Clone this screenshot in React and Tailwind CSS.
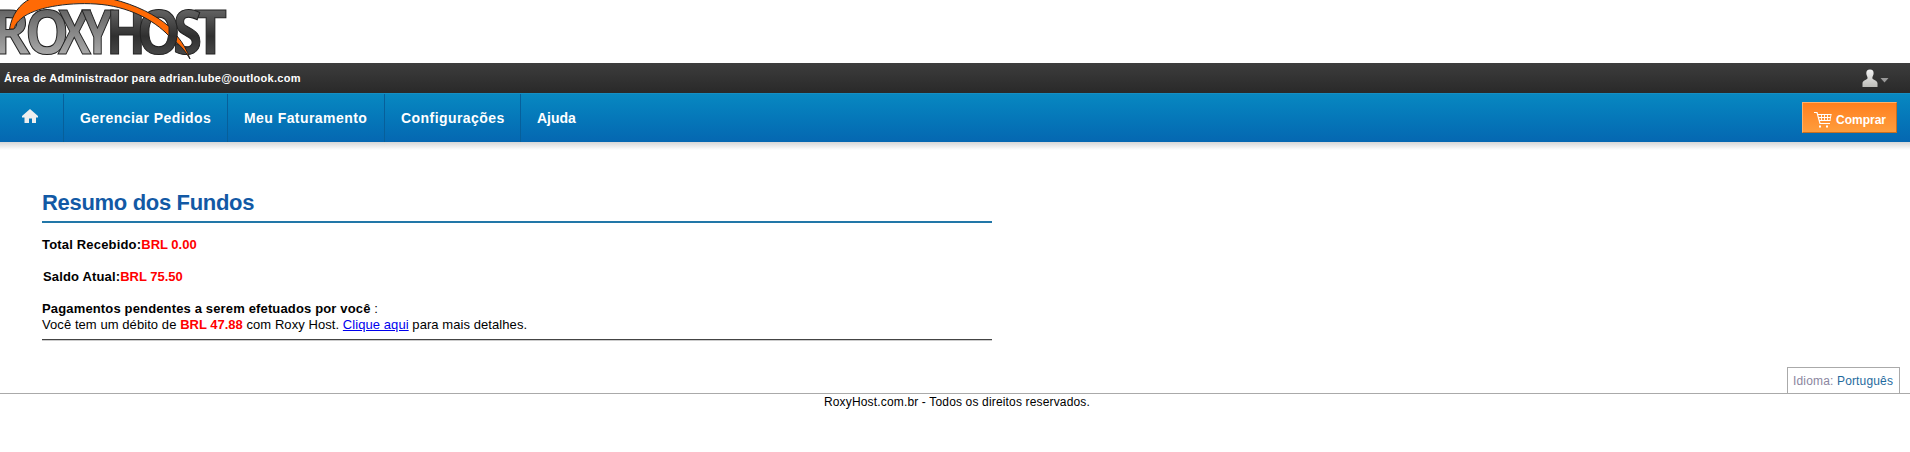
import React from "react";

function Glyph({ x, w, fill, children }) {
  return (
    <text x={x} y="53.5" fontSize="61" textLength={w} lengthAdjust="spacingAndGlyphs" fill={fill} stroke="#222" strokeWidth="1.1">
      {children}
    </text>
  );
}

function Logo() {
  return (
    <svg width="232" height="63" viewBox="0 0 232 63" className="block font-['Open_Sans',sans-serif] font-bold">
      <defs>
        <linearGradient id="light" gradientUnits="userSpaceOnUse" x1="0" y1="8" x2="0" y2="55">
          <stop offset="0" stopColor="#626262" />
          <stop offset="1" stopColor="#a9a9a9" />
        </linearGradient>
        <linearGradient id="dark" gradientUnits="userSpaceOnUse" x1="0" y1="8" x2="0" y2="55">
          <stop offset="0" stopColor="#666" />
          <stop offset="0.6" stopColor="#303030" />
          <stop offset="1" stopColor="#484848" />
        </linearGradient>
      </defs>
      <Glyph x="-8" w="38" fill="url(#light)">R</Glyph>
      <Glyph x="25" w="44" fill="url(#light)">O</Glyph>
      <Glyph x="58" w="33" fill="url(#light)">X</Glyph>
      <Glyph x="82" w="31" fill="url(#light)">Y</Glyph>
      <Glyph x="106" w="40" fill="url(#dark)">H</Glyph>
      <Glyph x="194" w="33" fill="url(#dark)">T</Glyph>
      <Glyph x="173" w="29" fill="url(#dark)">S</Glyph>
      <Glyph x="137" w="43.5" fill="url(#dark)">O</Glyph>
      <g fill="#ff6a05" stroke="#222" strokeWidth="1">
        <path d="M9.5 29C12 14 20 4 30-1C55-9 90-6 112-1C136 5 156 15 169 26.5V36C154 20 128 6 96 4C66 2 34 8 22 18C17 22 15 25 14 29Z" />
        <path d="M177 36C183 43 187 50 190 59C186 52 181 46 176 42Z" />
      </g>
    </svg>
  );
}

function HomeIcon() {
  return (
    <svg width="16" height="14" viewBox="0 0 16 14" className="block">
      <path d="M8 0L16 7V8.5H14V14H10V9.5H7V14H2.5V8.5H0V7Z" fill="#eee" />
    </svg>
  );
}

function CartIcon() {
  return (
    <svg width="18" height="16" viewBox="0 0 18 16" className="block shrink-0" fill="none" stroke="#fff">
      <path d="M0 0.5H3L6 11.5H16" strokeWidth="1.2" />
      <path d="M3.5 2.5H17.5M4 5.5H17M5 8.5H16.5" />
      <path d="M7.5 2.5V8.5M10.5 2.5V8.5M13.5 2.5V8.5M17 2.5L16 8.5" strokeWidth="0.9" />
      <path d="M5 14.5H7M12 14.5H14" strokeWidth="2" />
    </svg>
  );
}

function UserIcon() {
  return (
    <svg width="27" height="18" viewBox="0 0 27 18" className="block">
      <defs>
        <linearGradient id="user" x1="0" y1="0" x2="0" y2="1">
          <stop offset="0" stopColor="#f4f4f4" />
          <stop offset="1" stopColor="#bcbcb8" />
        </linearGradient>
      </defs>
      <path d="M8 0.5C10.6 0.5 11.8 2 11.6 4.6C11.5 6.6 10.5 7.3 10.3 9C10.6 11 15.5 11 15.5 14.5V18H0.5V14.5C0.5 11 5.2 11 5.6 9C5.4 7.3 4.4 6.6 4.3 4.6C4.2 2 5.4 0.5 8 0.5Z" fill="url(#user)" />
      <path d="M18.5 9H26.5L22.5 13.5Z" fill="#999" />
    </svg>
  );
}

export default function App() {
  return (
    <div className="flex h-[452px] w-full flex-col bg-white font-['Liberation_Sans',Arial,sans-serif] text-[13px] leading-4 text-black">
      <header className="h-[63px] shrink-0">
        <Logo />
      </header>
      <div className="flex h-[30px] shrink-0 items-center justify-between bg-linear-to-b from-[#3d3d3d] to-[#292929] pr-[21px] pl-1">
        <span className="text-[11px] font-bold tracking-[0.29px] text-white">Área de Administrador para adrian.lube@outlook.com</span>
        <UserIcon />
      </div>
      <nav className="flex h-[49px] shrink-0 justify-between border-t border-[#158fc4] bg-linear-to-b from-[#0888c1] to-[#0567b1] pr-[13px] text-sm font-bold text-white">
        <div className="flex leading-[49px] tracking-[0.44px]">
          <a className="w-16 border-r border-[#075f9a] pt-[15px] pl-[22px]"><HomeIcon /></a>
          <a className="w-[164px] border-r border-[#075f9a] pl-4">Gerenciar Pedidos</a>
          <a className="w-[157px] border-r border-[#075f9a] pl-4">Meu Faturamento</a>
          <a className="w-[136px] border-r border-[#075f9a] pl-4">Configurações</a>
          <a className="pl-4 tracking-normal">Ajuda</a>
        </div>
        <a className="mt-2 flex h-[31px] w-[95px] items-center gap-1 border border-t-[#ffb26b] border-r-[#c96f20] border-b-[#c96f20] border-l-[#ffb26b] bg-linear-to-b from-[#ff7f1d] to-[#ff9d3c] pt-1 pl-[11px] text-xs">
          <CartIcon />
          Comprar
        </a>
      </nav>
      <div className="h-2 shrink-0 bg-linear-to-b from-[#d6d6d6] to-white" />
      <main className="ml-[42px] h-[217px] w-[950px] shrink-0 pt-[38px]">
        <h1 className="h-[35px] border-b-2 border-[#2277a8] text-[22px] leading-[29px] font-bold tracking-[-0.32px] text-[#1259a5]">Resumo dos Fundos</h1>
        <p className="mt-[14px] font-bold tracking-[0.18px]">Total Recebido:<span className="tracking-normal text-[#f00]">BRL 0.00</span></p>
        <p className="mt-4 pl-px font-bold tracking-[0.15px]">Saldo Atual:<span className="tracking-normal text-[#f00]">BRL 75.50</span></p>
        <p className="mt-4"><b className="tracking-[0.15px]">Pagamentos pendentes a serem efetuados por você</b> :</p>
        <p className="tracking-[0.07px]">Você tem um débito de <b className="tracking-normal text-[#f00]">BRL 47.88</b> com Roxy Host. <a className="text-[#00e] underline">Clique aqui</a> para mais detalhes.</p>
        <hr className="mt-[6px] h-0.5 border-t border-b border-t-[#444] border-b-[#ccc]" />
      </main>
      <footer className="text-xs tracking-[0.16px]">
        <div className="flex h-[27px] justify-end border-b border-[#aaa] pr-[10px]">
          <div className="h-[26px] w-[113px] border-x border-t border-[#aaa] pl-[5px] leading-[27px] text-[#8b86a0]">Idioma: <span className="text-[#1f6b9e]">Português</span></div>
        </div>
        <p className="pl-1 text-center">RoxyHost.com.br - Todos os direitos reservados.</p>
      </footer>
    </div>
  );
}
